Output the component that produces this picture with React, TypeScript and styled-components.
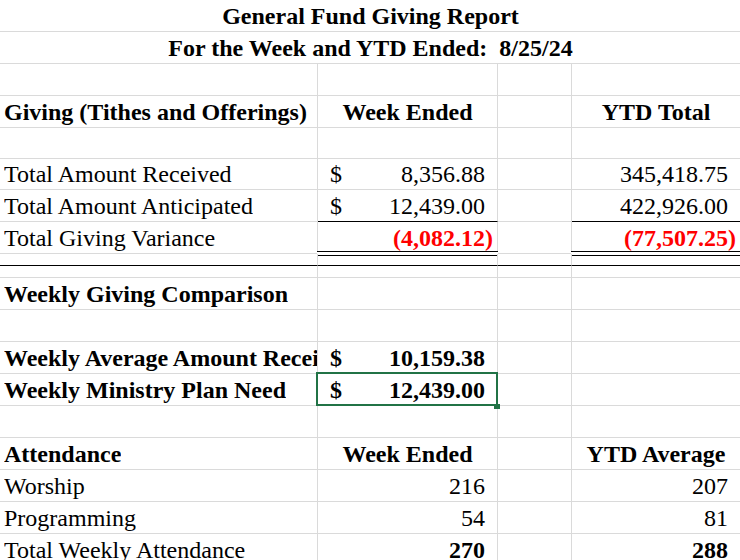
import React from 'react'
import styled, { createGlobalStyle, css } from 'styled-components'

const GRID = '#dadada'
const INK = '#000'
const SELECT = '#217346'

type Align = 'left' | 'center' | 'right'
type Rule = 'single' | 'double' | 'heavy'

const GlobalStyle = createGlobalStyle`
  * {
    box-sizing: border-box;
  }
  body {
    margin: 0;
    background: #fff;
    overflow: hidden;
    font-family: 'Liberation Serif', 'Times New Roman', serif;
    color: ${INK};
  }
`

const Sheet = styled.div`
  display: flex;
  flex-direction: column;
  width: 741px;
  font-size: 24px;
  line-height: 1.15;
`

const Row = styled.div<{ $h?: number }>`
  display: grid;
  grid-template-columns: 318px 180px 74px 169px;
  height: ${p => p.$h ?? 32}px;
`

const Cell = styled.div<{
  $align?: Align
  $bold?: boolean
  $red?: boolean
  $rule?: Rule
  $selected?: boolean
}>`
  position: relative;
  display: flex;
  align-items: flex-end;
  justify-content: ${p =>
    p.$align === 'center'
      ? 'center'
      : p.$align === 'right'
      ? 'flex-end'
      : 'flex-start'};
  min-width: 0;
  padding: 0 4px;
  border-right: 1px solid ${GRID};
  border-bottom: 1px solid
    ${p => (p.$rule === 'single' || p.$rule === 'heavy' ? INK : GRID)};
  font-weight: ${p => (p.$bold ? 700 : 400)};
  color: ${p => (p.$red ? '#ff0000' : INK)};
  white-space: pre;

  ${p =>
    p.$rule === 'double' &&
    css`
      &::after {
        content: '';
        position: absolute;
        left: -1px;
        right: -1px;
        bottom: -3px;
        height: 3px;
        border-top: 1px solid ${INK};
        border-bottom: 1px solid ${INK};
        background: #fff;
      }
    `}

  ${p =>
    p.$selected &&
    css`
      &::after {
        content: '';
        position: absolute;
        left: -2px;
        top: -2px;
        right: -1px;
        bottom: -1px;
        border: 2px solid ${SELECT};
        z-index: 1;
      }
      &::before {
        content: '';
        position: absolute;
        right: -3px;
        bottom: -4px;
        width: 6px;
        height: 5px;
        background: ${SELECT};
        z-index: 2;
      }
    `}
`

const TitleCell = styled(Cell)`
  grid-column: 1 / -1;
  justify-content: center;
  border-right: none;
  font-weight: 700;
`

const Label = styled.span`
  display: block;
  min-width: 0;
  overflow: hidden;
`

const LabelCell = styled(Cell)`
  padding-right: 0;
`

const MoneyCell = styled(Cell)`
  justify-content: space-between;
  padding-left: 12px;
`

const Pad = styled.span`
  visibility: hidden;
`

function Num({ value }: { value: string }) {
  const negative = value.startsWith('(')
  return (
    <span>
      {value}
      {negative ? null : <Pad>)</Pad>}
    </span>
  )
}

function Money(props: {
  value?: string
  bold?: boolean
  red?: boolean
  rule?: Rule
  selected?: boolean
}) {
  return (
    <MoneyCell
      $bold={props.bold}
      $red={props.red}
      $rule={props.rule}
      $selected={props.selected}
    >
      <span>{props.value ? '$' : ''}</span>
      {props.value ? <Num value={props.value} /> : null}
    </MoneyCell>
  )
}

function Blank({ rule }: { rule?: Rule }) {
  return <Cell $rule={rule} />
}

const App = () => {
  return (
    <>
      <GlobalStyle />
      <Sheet>
        <Row>
          <TitleCell>General Fund Giving Report</TitleCell>
        </Row>
        <Row>
          <TitleCell>For the Week and YTD Ended:  8/25/24</TitleCell>
        </Row>
        <Row>
          <Blank />
          <Blank />
          <Blank />
          <Blank />
        </Row>
        <Row>
          <LabelCell $bold>
            <Label>Giving (Tithes and Offerings)</Label>
          </LabelCell>
          <Cell $bold $align="center">
            Week Ended
          </Cell>
          <Blank />
          <Cell $bold $align="center">
            YTD Total
          </Cell>
        </Row>
        <Row $h={31}>
          <Blank />
          <Blank />
          <Blank />
          <Blank />
        </Row>
        <Row $h={31}>
          <LabelCell>
            <Label>Total Amount Received</Label>
          </LabelCell>
          <Money value="8,356.88" />
          <Blank />
          <Cell $align="right">
            <Num value="345,418.75" />
          </Cell>
        </Row>
        <Row>
          <LabelCell>
            <Label>Total Amount Anticipated</Label>
          </LabelCell>
          <Money value="12,439.00" rule="single" />
          <Blank />
          <Cell $align="right" $rule="single">
            <Num value="422,926.00" />
          </Cell>
        </Row>
        <Row>
          <LabelCell>
            <Label>Total Giving Variance</Label>
          </LabelCell>
          <Cell $align="right" $bold $red $rule="double">
            <Num value="(4,082.12)" />
          </Cell>
          <Blank />
          <Cell $align="right" $bold $red $rule="double">
            <Num value="(77,507.25)" />
          </Cell>
        </Row>
        <Row $h={12}>
          <Blank rule="heavy" />
          <Blank rule="heavy" />
          <Blank rule="heavy" />
          <Blank rule="heavy" />
        </Row>
        <Row $h={12}>
          <Blank />
          <Blank />
          <Blank />
          <Blank />
        </Row>
        <Row>
          <LabelCell $bold>
            <Label>Weekly Giving Comparison</Label>
          </LabelCell>
          <Blank />
          <Blank />
          <Blank />
        </Row>
        <Row>
          <Blank />
          <Blank />
          <Blank />
          <Blank />
        </Row>
        <Row>
          <LabelCell $bold>
            <Label>Weekly Average Amount Received</Label>
          </LabelCell>
          <Money value="10,159.38" bold />
          <Blank />
          <Blank />
        </Row>
        <Row>
          <LabelCell $bold>
            <Label>Weekly Ministry Plan Need</Label>
          </LabelCell>
          <Money value="12,439.00" bold selected />
          <Blank />
          <Blank />
        </Row>
        <Row>
          <Blank />
          <Blank />
          <Blank />
          <Blank />
        </Row>
        <Row>
          <LabelCell $bold>
            <Label>Attendance</Label>
          </LabelCell>
          <Cell $bold $align="center">
            Week Ended
          </Cell>
          <Blank />
          <Cell $bold $align="center">
            YTD Average
          </Cell>
        </Row>
        <Row>
          <LabelCell>
            <Label>Worship</Label>
          </LabelCell>
          <Cell $align="right">
            <Num value="216" />
          </Cell>
          <Blank />
          <Cell $align="right">
            <Num value="207" />
          </Cell>
        </Row>
        <Row>
          <LabelCell>
            <Label>Programming</Label>
          </LabelCell>
          <Cell $align="right">
            <Num value="54" />
          </Cell>
          <Blank />
          <Cell $align="right">
            <Num value="81" />
          </Cell>
        </Row>
        <Row>
          <LabelCell>
            <Label>Total Weekly Attendance</Label>
          </LabelCell>
          <Cell $align="right" $bold>
            <Num value="270" />
          </Cell>
          <Blank />
          <Cell $align="right" $bold>
            <Num value="288" />
          </Cell>
        </Row>
      </Sheet>
    </>
  )
}

export default App
